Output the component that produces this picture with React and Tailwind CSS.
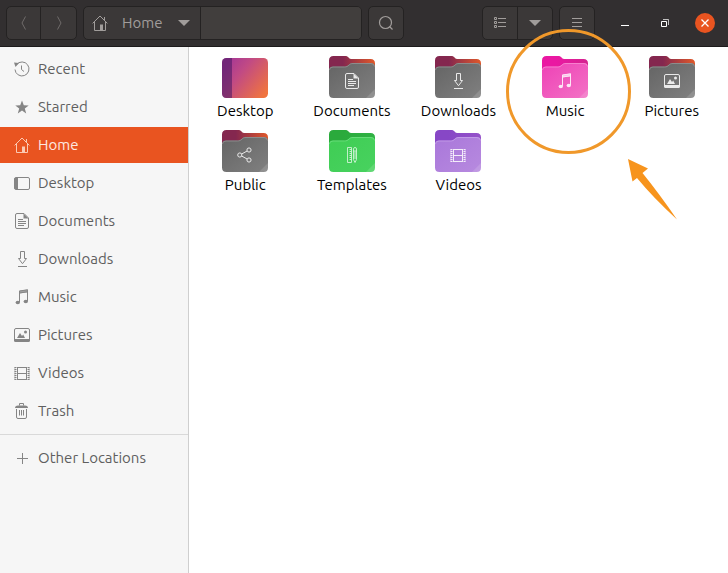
import React, { useState } from 'react';

const PLACES = [
  { label: 'Recent', icon: RecentIcon },
  { label: 'Starred', icon: StarIcon },
  { label: 'Home', icon: HomeIcon },
  { label: 'Desktop', icon: DesktopIcon },
  { label: 'Documents', icon: DocumentIcon },
  { label: 'Downloads', icon: DownloadIcon },
  { label: 'Music', icon: MusicIcon },
  { label: 'Pictures', icon: PictureIcon },
  { label: 'Videos', icon: VideoIcon },
  { label: 'Trash', icon: TrashIcon },
];

const GREY = { back: ['#84274f', '#e0592a'], front: ['#646464', '#808080'], edge: '#949494' };
const PINK = { back: ['#ea18a2', '#d4248f'], front: ['#ee41b6', '#f372c5'], edge: '#f98bd3' };
const GREEN = { back: ['#2aaa3c', '#30b244'], front: ['#3fcd54', '#48d25f'], edge: '#6fdf80' };
const PURPLE = { back: ['#8747c6', '#9552c9'], front: ['#a977da', '#b78adf'], edge: '#c7a1ea' };

const FILES = [
  { name: 'Desktop' },
  { name: 'Documents', colors: GREY, icon: DocumentIcon },
  { name: 'Downloads', colors: GREY, icon: DownloadIcon },
  { name: 'Music', colors: PINK, icon: MusicIcon, highlighted: true },
  { name: 'Pictures', colors: GREY, icon: PictureIcon },
  { name: 'Public', colors: GREY, icon: ShareIcon },
  { name: 'Templates', colors: GREEN, icon: TemplateIcon },
  { name: 'Videos', colors: PURPLE, icon: VideoIcon },
];

export default function App() {
  const [current, setCurrent] = useState('Home');

  return (
    <div className="min-h-screen flex flex-col bg-white font-['Ubuntu','Noto_Sans',sans-serif] text-[15px]">
      <HeaderBar />

      <div className="flex flex-1">
        {/* Sidebar */}
        <nav className="w-[189px] shrink-0 bg-[#f6f6f6] border-r border-[#cfcfcf] pt-1">
          <div className="flex flex-col gap-0.5">
            {PLACES.map((p) => (
              <PlaceLink
                key={p.label}
                place={p}
                active={p.label === current}
                onSelect={() => setCurrent(p.label)}
              />
            ))}
          </div>
          <div className="h-px bg-[#d9d9d9] my-[5px]" />
          <PlaceLink
            place={{ label: 'Other Locations', icon: PlusIcon }}
            active={current === 'Other Locations'}
            onSelect={() => setCurrent('Other Locations')}
          />
        </nav>

        {/* Files */}
        <main className="flex-1 px-[3px] pt-[9px]">
          <div className="grid grid-cols-[repeat(auto-fill,minmax(100px,1fr))] gap-y-2">
            {FILES.map((f) => (
              <FileTile key={f.name} file={f} />
            ))}
          </div>
        </main>
      </div>
    </div>
  );
}

function HeaderBar() {
  const box = 'bg-[#3b3838] border border-[#242222] rounded-[5px]';

  return (
    <header className="flex items-center gap-1.5 h-[47px] px-1.5 bg-[#322f30] border-b border-[#1d1b1c] text-[#a19d9b]">
      <div className={`flex h-[34px] ${box} text-[#6f6b6a]`}>
        <button aria-label="Back" className="w-[34px] grid place-items-center border-r border-[#242222]">
          <svg width="16" height="16" viewBox="0 0 16 16" fill="none" stroke="currentColor">
            <path d="M9.500 1.500 6 8l3.500 6.500" />
          </svg>
        </button>
        <button aria-label="Forward" className="w-[35px] grid place-items-center">
          <svg width="16" height="16" viewBox="0 0 16 16" fill="none" stroke="currentColor">
            <path d="M6.500 1.500 10 8l-3.500 6.500" />
          </svg>
        </button>
      </div>

      <div className={`flex flex-1 max-w-[279px] h-[34px] ${box}`}>
        <button className="flex items-center pl-2 pr-2.5 w-[117px] border-r border-[#242222]">
          <HomeIcon />
          <span className="ml-3.5 flex-1 text-left">Home</span>
          <CaretDown />
        </button>
        <div className="flex-1 bg-[#413e3d] rounded-r-[4px]" />
      </div>

      <button aria-label="Search" className={`w-9 h-[34px] grid place-items-center ${box}`}>
        <svg width="16" height="16" viewBox="0 0 16 16" fill="none" stroke="currentColor" strokeWidth="1.2">
          <circle cx="7.500" cy="7.500" r="6" />
          <path d="m11.500 11.500 3 3" />
        </svg>
      </button>

      <div className={`ml-auto flex h-[34px] ${box}`}>
        <button aria-label="List view" className="w-[35px] grid place-items-center border-r border-[#242222]">
          <svg width="14" height="12" viewBox="0 0 14 12" fill="none" stroke="currentColor">
            <path d="M1.500.5h2v2h-2zM1.500 4.500h2v2h-2zM1.500 8.500h2v2h-2zM5 1.500h8M5 5.500h8M5 9.500h8" />
          </svg>
        </button>
        <button aria-label="View options" className="w-[34px] grid place-items-center">
          <CaretDown />
        </button>
      </div>

      <button aria-label="Menu" className={`w-9 h-[34px] grid place-items-center ${box}`}>
        <svg width="12" height="12" viewBox="0 0 12 12" fill="none" stroke="currentColor">
          <path d="M1 1.500h10M1 5.500h10M1 9.500h10" />
        </svg>
      </button>

      {/* Window controls */}
      <div className="flex gap-5 ml-3.5 mr-[7px] text-white">
        <button aria-label="Minimize" className="w-5 h-5">
          <svg width="20" height="20" viewBox="0 0 20 20" fill="none" stroke="currentColor">
            <path d="M6 12.500h8" />
          </svg>
        </button>
        <button aria-label="Restore" className="w-5 h-5">
          <svg width="20" height="20" viewBox="0 0 20 20" fill="none" stroke="currentColor">
            <path d="M6.500 8.500h5v5h-5z" />
            <path d="M8 6.500h5.500v5.500" opacity=".7" />
          </svg>
        </button>
        <button aria-label="Close" className="w-5 h-5 rounded-full bg-[#e95420]">
          <svg width="20" height="20" viewBox="0 0 20 20" fill="none" stroke="currentColor" strokeWidth="1.300">
            <path d="m6.500 6.500 7 7M13.500 6.500l-7 7" />
          </svg>
        </button>
      </div>
    </header>
  );
}

function PlaceLink({ place, active, onSelect }) {
  const Icon = place.icon;
  return (
    <a
      href="#"
      onClick={(e) => {
        e.preventDefault();
        onSelect();
      }}
      className={`flex items-center gap-2 h-9 pl-3.5 ${
        active ? 'bg-[#e95420] text-[#fde9e1]' : 'text-[#5f5f5f]'
      }`}
    >
      <span className={active ? 'text-[#fbc9b2]' : 'text-[#858585]'}>
        <Icon />
      </span>
      {place.label}
    </a>
  );
}

function FileTile({ file }) {
  return (
    <div className="relative flex justify-center">
      <button className="flex flex-col items-center gap-0.5 text-black leading-[22px]">
        {file.colors ? <Folder id={file.name} colors={file.colors} icon={file.icon} /> : <DesktopTile />}
        {file.name}
      </button>
      {file.highlighted && <Highlight />}
    </div>
  );
}

function Folder({ id, colors, icon: Icon }) {
  return (
    <svg width="46" height="42" viewBox="0 0 46 42">
      <defs>
        <linearGradient id={`${id}-back`} x1="0" y1="0" x2="1" y2="0">
          <stop offset=".3" stopColor={colors.back[0]} />
          <stop offset="1" stopColor={colors.back[1]} />
        </linearGradient>
        <linearGradient id={`${id}-front`} x1="0" y1="0" x2="1" y2="1">
          <stop offset="0" stopColor={colors.front[0]} />
          <stop offset="1" stopColor={colors.front[1]} />
        </linearGradient>
      </defs>
      <path
        d="M0 4.500Q0 0 4.500 0H16c2 0 2.800.5 3.800 1.700S21.500 3 23 3h18.500Q46 3 46 7.500V20H0z"
        fill={`url(#${id}-back)`}
      />
      <path
        d="M0 14.500Q0 10.500 4 10.500H15.500c2 0 3-.6 4.200-1.800S22 7 24 7h18q4 0 4 4v26.500q0 4.500-4.500 4.500h-37Q0 42 0 37.500z"
        fill={`url(#${id}-front)`}
      />
      <path
        d="M.5 14q0-3 3.500-3h11.500c2 0 3.300-.7 4.500-1.900s2-1.600 4-1.600h18q3 0 3.500 3"
        fill="none"
        stroke={colors.edge}
        strokeWidth=".8"
      />
      <path d="M46 33v4.500q0 4.500-4.500 4.500H37z" fill="#fff" opacity=".14" />
      <g transform="translate(15 17)" color="#fff" opacity=".85">
        <Icon />
      </g>
    </svg>
  );
}

function DesktopTile() {
  return (
    <svg width="46" height="42" viewBox="0 0 46 42">
      <defs>
        <linearGradient id="desktop-bg" x1="0" y1=".1" x2="1" y2=".8">
          <stop offset=".1" stopColor="#a93a93" />
          <stop offset=".4" stopColor="#c14a84" />
          <stop offset="1" stopColor="#f0743f" />
        </linearGradient>
      </defs>
      <rect y="2" width="46" height="40" rx="4.500" fill="url(#desktop-bg)" />
      <path d="M10 2H4.500Q0 2 0 6.500v31Q0 42 4.500 42H10z" fill="#3f1560" opacity=".52" />
    </svg>
  );
}

// Circle and arrow that point at a folder
function Highlight() {
  return (
    <svg
      width="172"
      height="192"
      viewBox="0 0 172 192"
      className="absolute left-1/2 -ml-[59px] -top-[27px] pointer-events-none"
    >
      <circle cx="62.500" cy="62.500" r="61" fill="none" stroke="#f0982a" strokeWidth="3" />
      <path d="M122 130l20 9.500-5.500 4.500q17 21 34.500 46.500-24-22-40-41.500l-4.500 3.500z" fill="#f7941d" />
    </svg>
  );
}

function CaretDown() {
  return (
    <svg width="12" height="6" viewBox="0 0 12 6" fill="currentColor">
      <path d="M0 0h12L6 6z" />
    </svg>
  );
}

function Glyph({ children }) {
  return (
    <svg width="16" height="16" viewBox="0 0 16 16" fill="none" stroke="currentColor" className="block">
      {children}
    </svg>
  );
}

function RecentIcon() {
  return (
    <Glyph>
      <path d="M2.500 3.600A7 7 0 1 1 1 8.500M7.500 4.500v4l2.500 2" />
      <path d="M0 1.500 5 2 1.500 6z" fill="currentColor" stroke="none" />
    </Glyph>
  );
}

function StarIcon() {
  return (
    <Glyph>
      <path
        d="m8 1.500 1.800 4.700 4.900.2-3.900 3.100 1.400 4.900L8 11.600l-4.200 2.800 1.400-4.900-3.900-3.100 4.900-.2z"
        fill="currentColor"
        stroke="none"
      />
    </Glyph>
  );
}

function HomeIcon() {
  return (
    <Glyph>
      <path d="M.6 8.400 8 1l7.400 7.400M2.500 7v8.500h11V7M12.500 2v3" />
      <path d="M8 9.500h3V15H8z" fill="currentColor" stroke="none" />
    </Glyph>
  );
}

function DesktopIcon() {
  return (
    <Glyph>
      <rect x=".5" y="2.500" width="15" height="12" rx="1.500" />
      <path d="M.5 3h3.500v11H.5z" fill="currentColor" stroke="none" />
    </Glyph>
  );
}

function DocumentIcon() {
  return (
    <Glyph>
      <path d="M10 .5H3Q1.500.5 1.500 2v12q0 1.500 1.500 1.500h10q1.500 0 1.500-1.500V5z" />
      <path d="M9.500.5V5.500h5z" fill="currentColor" stroke="none" />
      <path d="M4 6.500h5M4 8.500h8M4 10.500h8M4 12.500h6" />
    </Glyph>
  );
}

function DownloadIcon() {
  return (
    <Glyph>
      <path d="M6.500.5h4v7h2L8.500 12.700 4.500 7.500h2zM4 15.500h9" />
    </Glyph>
  );
}

function MusicIcon() {
  return (
    <Glyph>
      <path d="M5.500 13V2l8-1.200V12M5.500 4l8-1.200" />
      <path d="M5 1.800 14 .5v2.700L5 4.500z" fill="currentColor" stroke="none" opacity=".75" />
      <ellipse cx="3.800" cy="13.500" rx="2.200" ry="1.800" fill="currentColor" stroke="none" />
      <ellipse cx="11.800" cy="12.500" rx="2.200" ry="1.800" fill="currentColor" stroke="none" />
    </Glyph>
  );
}

function PictureIcon() {
  return (
    <Glyph>
      <rect x=".5" y="1.500" width="15" height="12.500" rx="1.500" />
      <path d="M0 12h16v1.500q0 1.500-1.500 1.500h-13Q0 15 0 13.500z" fill="currentColor" stroke="none" />
      <path d="m3 11 3-5 2 3 1.200-1.500L11 11z" fill="currentColor" stroke="none" />
      <circle cx="11.500" cy="5" r="1.500" fill="currentColor" stroke="none" />
    </Glyph>
  );
}

function VideoIcon() {
  return (
    <Glyph>
      <path d="M3.500 2v13M12.500 2v13M3 2.500h10M4 8.500h8M3 14.500h10" />
      <path d="M1.500 2v13M14.500 2v13" strokeWidth="2" strokeDasharray="1 1" />
      <path d="M.9 2v13M15.100 2v13" strokeWidth=".5" />
    </Glyph>
  );
}

function ShareIcon() {
  return (
    <Glyph>
      <circle cx="2.800" cy="8" r="2.100" />
      <circle cx="12" cy="3" r="2.100" />
      <circle cx="12" cy="13" r="2.100" />
      <path d="m4.700 7 5.400-3M4.700 9l5.400 3" />
    </Glyph>
  );
}

function TemplateIcon() {
  return (
    <Glyph>
      <g strokeWidth=".8">
        <path d="M3.500.5h4v15h-4zM5.500 2.500h2M5.500 4.500h2M5.500 6.500h2M5.500 8.500h2M5.500 10.500h2M5.500 12.500h2" />
        <path d="M9.500 2q0-1.500 1.500-1.500T12.500 2v10.500L11 15.500l-1.500-3zM9.500 4h3M11 4.500V12" />
      </g>
    </Glyph>
  );
}

function TrashIcon() {
  return (
    <Glyph>
      <path d="M2.500 6v8q0 1.500 1.500 1.500h7q1.500 0 1.500-1.500V6M5.500 7v5.500M7.500 7v5.500M9.500 7v5.500M5.500 2.500v-2h4v2" />
      <path d="M1 5q0-2.500 3-2.500h7q3 0 3 2.500z" fill="currentColor" stroke="none" />
    </Glyph>
  );
}

function PlusIcon() {
  return (
    <Glyph>
      <path d="M8.500 3v11M3 8.500h11" />
    </Glyph>
  );
}
